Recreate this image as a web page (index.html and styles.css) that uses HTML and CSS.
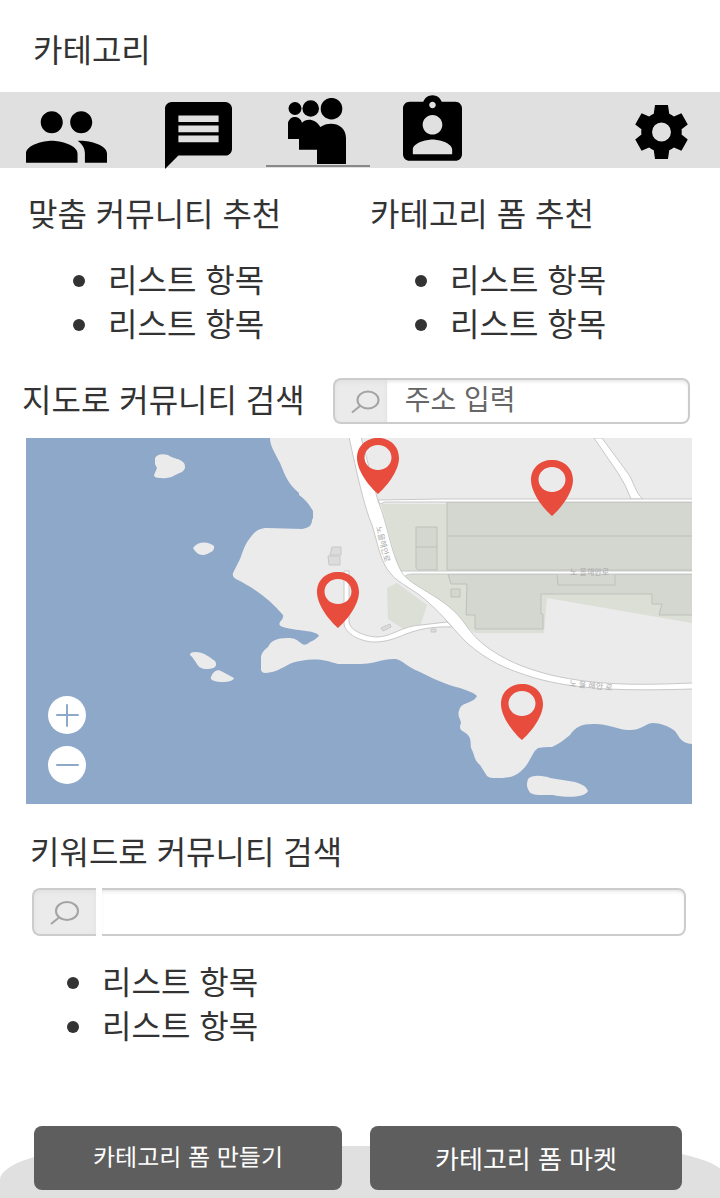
FILE: index.html
```html
<!DOCTYPE html>
<html lang="ko">
<head>
<meta charset="utf-8">
<meta name="viewport" content="width=device-width, initial-scale=1">
<title>카테고리</title>
<link rel="stylesheet" href="styles.css">
</head>
<body>
<div class="page">
  <header class="header"><h1 class="title">카테고리</h1></header>

  <nav class="tabs" aria-label="메뉴">
    <a class="tab tab-people" href="#people" aria-label="친구">
      <svg viewBox="1 5 22 14" width="81" height="52"><path d="M16 11c1.66 0 2.99-1.34 2.99-3S17.66 5 16 5s-3 1.34-3 3 1.34 3 3 3zm-8 0c1.66 0 2.99-1.34 2.99-3S9.66 5 8 5 5 6.340 5 8s1.340 3 3 3zm0 2c-2.330 0-7 1.170-7 3.500V19h14v-2.500c0-2.330-4.670-3.500-7-3.500zm8 0c-.29 0-.62.02-.97.05 1.160.84 1.970 1.970 1.970 3.450V19h6v-2.500c0-2.330-4.670-3.500-7-3.500z"/></svg>
    </a>
    <a class="tab tab-chat" href="#chat" aria-label="메시지">
      <svg viewBox="2 2 20 20" width="67" height="67"><path d="M20 2H4c-1.100 0-1.990.9-1.990 2L2 22l4-4h14c1.100 0 2-.9 2-2V4c0-1.100-.9-2-2-2zm-2 12H6v-2h12v2zm0-3H6V9h12v2zm0-3H6V6h12v2z"/></svg>
    </a>
    <a class="tab tab-community" href="#community" aria-label="커뮤니티" aria-current="page">
      <svg viewBox="288 98 58 66" width="58" height="66"><circle cx="295" cy="108.500" r="6.500"/><circle cx="310.700" cy="108.500" r="8.300"/><circle cx="331.500" cy="108.700" r="10.800"/><path d="M288 139v-13.500a7 7 0 0 1 14-2.800c4-4.500 13.500-4.500 18.300 4.300C329 120.500 346 123 346 138v26h-29v-14.300h-18V139z"/></svg>
    </a>
    <a class="tab tab-profile" href="#profile" aria-label="프로필">
      <svg viewBox="3 1 18 20" width="59" height="66"><path d="M19 3h-4.180C14.400 1.840 13.300 1 12 1c-1.300 0-2.400.84-2.820 2H5c-1.100 0-2 .9-2 2v14c0 1.100.9 2 2 2h14c1.100 0 2-.9 2-2V5c0-1.100-.9-2-2-2zm-7 0c.55 0 1 .45 1 1s-.45 1-1 1-1-.45-1-1 .45-1 1-1zm0 4c1.660 0 3 1.340 3 3s-1.340 3-3 3-3-1.340-3-3 1.340-3 3-3zm6 12H6v-1.400c0-2 4-3.100 6-3.100s6 1.100 6 3.100V19z"/></svg>
    </a>
    <a class="tab tab-settings" href="#settings" aria-label="설정">
      <svg viewBox="2.270 2 19.460 20" width="53" height="54"><path d="M12 15.500a3.500 3.500 0 1 1 0-7 3.500 3.500 0 0 1 0 7m7.430-2.530c.04-.32.07-.64.07-.97s-.03-.66-.07-1l2.300-1.740-2.350-4.160-2.800 1.150c-.5-.4-1.080-.75-1.710-1L14.400 2H9.600l-.47 3.250c-.63.25-1.210.6-1.710 1L4.620 5.100 2.270 9.260 4.570 11c-.04.340-.07.670-.07 1s.03.650.07.970l-2.300 1.770 2.350 4.160 2.800-1.150c.5.4 1.080.75 1.710 1L9.600 22h4.800l.47-3.250c.63-.25 1.210-.6 1.710-1l2.800 1.150 2.350-4.160z"/></svg>
    </a>
  </nav>

  <main class="main">
    <div class="recommend">
      <section>
        <h2 class="heading">맞춤 커뮤니티 추천</h2>
        <ul class="list"><li>리스트 항목</li><li>리스트 항목</li></ul>
      </section>
      <section>
        <h2 class="heading">카테고리 폼 추천</h2>
        <ul class="list"><li>리스트 항목</li><li>리스트 항목</li></ul>
      </section>
    </div>

    <section class="map-section">
      <div class="map-head">
        <h2 class="heading">지도로 커뮤니티 검색</h2>
        <label class="search search-address">
          <span class="search-icon"><svg viewBox="0 0 30 26" width="30" height="26"><ellipse cx="18" cy="12" rx="10.500" ry="8.500"/><path d="M10 18 2 24.500"/></svg></span>
          <input type="text" placeholder="주소 입력" aria-label="주소 입력">
        </label>
      </div>
      <div class="map">
        <svg class="map-art" viewBox="26 438 666 366" role="img" aria-label="지도">
          <rect class="sea" x="26" y="438" width="666" height="366"/>
          <g class="land">
            <path d="M270 438C270 446 275 453 280 463C285 475 288 484 299 493L299 495C306 500 309 504 313 511L313 518L312 520C312 526 308 528 302 529L267 528C257 528 253 534 250 538C243 546 242 557 238 563L233 573Q232 577 236 579C256 589 270 600 283 615Q284 618 280 622Q278 626 283 627C295 631 317 630 319 636Q315 640 310 642Q306 646 302 644C297 640 295 638 288 638C276 638 271 641 268 647C263 651 261 654 261 658V670Q262 673 265 673C282 672 285 663 300 661C318 658 324 660 338 664H360C374 664 382 659 394 659C402 659 405 666 420 672C432 678 444 684 460 688Q475 693 477 696C474 703 463 702 460 708C456 716 461 719 461 723Q459 727 461 730L467 734C473 740 469 745 472 750C475 756 474 760 480 765L487 776Q489 778 493 778C506 778 513 778 520 772C531 763 531 753 538 748C544 747 547 747 552 747C559 744 564 740 570 735C575 727 582 724 593 724C612 724 616 730 630 730C642 730 646 723 653 723C660 723 669 726 675 731C680 738 681 743 692 744V438Z"/>
            <path d="M155 458C158 453 164 454 168 455C173 459 180 458 184 463Q187 468 182 472C174 475 172 479 160 478Q154 478 154 475L157 468L155 464Z"/>
            <path d="M193 548C198 541 208 541 214 546Q215 551 209 553C202 557 197 555 193 548Z"/>
            <path d="M190 655Q190 652 195 652C205 652 210 658 215 661C219 668 211 669 207 669C196 669 198 662 190 655Z"/>
            <path d="M211 677C213 672 217 669 221 671L234 678C233 684 208 683 211 677Z"/>
            <path d="M528 779C532 774 545 776 550 778L575 782Q586 785 588 791C584 799 562 797 553 795C542 795 531 796 529 791C526 786 527 783 528 779Z"/>
          </g>
          <path class="green" d="M381 504H692V623L547 598L544 633H475L402 581Z"/>
          <path class="green" d="M387 588 397 583 427 605 420 626 405 630 388 619Z"/>
          <g class="building">
            <path d="M447 502H693V570H447ZM447 536H693"/>
            <path d="M448 574 451 584H467L466 615H475V629H543V614H541V594H652V604H662L659 615H693V574Z"/>
            <path d="M416 527H437V570H418L416 568ZM416 547H437M451 589H460V597H451ZM557 574 558 585H615V574"/>
          </g>
          <g class="house">
            <path d="M332 547H341V555H330Z"/>
            <path d="M328 556H340V565H329Z"/>
            <path d="M381 628 390 624 391 627 383 631ZM431 629H436V632H431Z"/>
          </g>
          <g class="road">
            <path d="M594 438 618 473Q626 485 631 499H643C635 493 634 481 627 472L602 438Z"/>
            <path d="M378 500 440 499H693V502H385L380 504Z"/>
            <path d="M400 571 693 571V574H412Q405 574 401 580Z"/>
            <path d="M344 571H349V620C348 631 367 637 378 637C393 636 402 626 421 625L447 622L453 627C431 626 417 630 406 634C394 639 386 642 374 642C362 642 344 634 344 623Z"/>
            <path d="M349 437C357 474 364 506 372 525C378 544 380 562 391 574C399 584 416 590 430 604C443 615 454 630 467 643C488 661 505 669 535 678C577 690 625 691 693 689V683C642 685 598 686 551 675C523 668 502 659 483 644C467 631 464 618 448 606C431 592 407 583 401 571C390 550 388 525 378 501L361 437Z"/>
          </g>
          <g class="road-label">
            <text transform="translate(376 527) rotate(76)">노을해안로</text>
            <text x="570" y="575">노 을해안로</text>
            <text transform="translate(569 686) rotate(6)">노 을 해안 로</text>
          </g>
          <defs><path id="pin" fill-rule="evenodd" d="M21 56C14 50 0 34 0 20C0 8 9 0 21 0S42 8 42 20C42 34 28 50 21 56ZM21 7C13.500 7 7.500 12.500 7.500 19.500S13.500 32 21 32 34.500 26.500 34.500 19.500 28.500 7 21 7Z"/></defs>
          <g class="pins"><use href="#pin" x="357" y="438"/><use href="#pin" x="531" y="460"/><use href="#pin" x="317" y="572"/><use href="#pin" x="501" y="684"/></g>
        </svg>
        <div class="zoom">
          <button type="button" aria-label="확대"><svg viewBox="0 0 38 38" width="38" height="38"><path d="M9 19H30M19 9V30"/></svg></button>
          <button type="button" aria-label="축소"><svg viewBox="0 0 38 38" width="38" height="38"><path d="M9 19H30"/></svg></button>
        </div>
      </div>
    </section>

    <section class="keyword">
      <h2 class="heading">키워드로 커뮤니티 검색</h2>
      <label class="search search-keyword">
        <span class="search-icon"><svg viewBox="0 0 30 26" width="30" height="26"><ellipse cx="18" cy="12" rx="11" ry="9"/><path d="M10 18.500 2 25"/></svg></span>
        <input type="text" aria-label="키워드">
      </label>
      <ul class="list"><li>리스트 항목</li><li>리스트 항목</li></ul>
    </section>
  </main>

  <footer class="footer">
    <button class="action action-create" type="button">카테고리 폼 만들기</button>
    <button class="action action-market" type="button">카테고리 폼 마켓</button>
  </footer>
</div>
</body>
</html>
```
FILE: styles.css
```css
* { box-sizing: border-box; }

body {
  margin: 0;
  background: #fff;
  color: #333;
  font-family: "Liberation Sans", "Noto Sans CJK KR", sans-serif;
  font-size: 32px;
  line-height: 44px;
}

h1, h2, ul { margin: 0; padding: 0; }
svg { display: block; flex: none; }
input, button { font-family: inherit; border: 0; padding: 0; }

.page { display: flex; flex-direction: column; min-height: 100vh; }
.header { padding: 29px 33px 19px; }
.title, .heading { font-size: 32px; font-weight: 400; white-space: nowrap; }

.tabs {
  display: flex;
  height: 76px;
  padding: 0 32px 0 26px;
  background: #e0e0e0;
}
.tab { display: flex; justify-content: center; align-items: flex-start; color: #000; }
.tab svg { fill: currentColor; }
.tab-people { padding-top: 19px; }
.tab-chat { padding-top: 10px; margin-left: 58px; }
.tab-community {
  width: 104px;
  height: 75px;
  margin-left: 34px;
  padding: 6px 2px 0 0;
  border-bottom: 2px solid #888;
}
.tab-profile { padding-top: 3px; margin-left: 33px; }
.tab-settings { padding-top: 13px; margin-left: auto; }

.main { flex: 1; padding: 25px 28px 0; }
.recommend { display: grid; grid-template-columns: 342px 1fr; }
.list { margin-top: 22px; padding-left: 45px; list-style: none; }
.list li { display: flex; align-items: center; gap: 23px; }
.list li::before {
  content: "";
  width: 12px;
  height: 12px;
  border-radius: 50%;
  background: currentColor;
}

.map-section { margin: 31px 0 0 -6px; }
.map-head { display: flex; align-items: center; gap: 28px; padding-right: 2px; }
.search { display: flex; min-width: 0; }
.search-icon {
  display: flex;
  align-items: center;
  border: 2px solid #ccc;
  border-right: 0;
  border-radius: 8px 0 0 8px;
  background: #ebebeb;
  box-shadow: inset 0 2px 5px #e0e0e0;
}
.search-icon svg { fill: none; stroke: #a3a3a3; stroke-width: 2; }
.search input {
  flex: 1;
  min-width: 0;
  border: 2px solid #ccc;
  border-left: 0;
  border-radius: 0 8px 8px 0;
  background: #fff;
  box-shadow: inset 0 3px 4px -2px #ddd;
  color: #333;
  font-size: 28px;
}
.search input::placeholder { color: #666; opacity: 1; }
.search-address { flex: 1; height: 46px; }
.search-address .search-icon { width: 54px; padding-left: 15px; }
.search-address input { padding-left: 18px; }

.map { position: relative; margin: 14px 0 0 4px; }
.map-art { width: 100%; height: auto; }
.sea { fill: #8ea8c9; }
.land { fill: #ebebeb; }
.green { fill: #dcdfd6; }
.building path { fill: #d4d7d0; stroke: #bdc0ba; stroke-width: 1; }
.house path { fill: #dcdcdc; stroke: #c8c8c8; stroke-width: 1; }
.road path { fill: #fff; stroke: #c8c8c8; stroke-width: 1; }
.road-label { fill: #aaa; font-size: 8px; }
.pins { fill: #e74c3c; }
.zoom {
  position: absolute;
  left: 22px;
  bottom: 20px;
  display: flex;
  flex-direction: column;
  gap: 12px;
}
.zoom button { width: 38px; height: 38px; border-radius: 50%; background: #fff; }
.zoom svg { fill: none; stroke: #8ea8c9; stroke-width: 2; stroke-linecap: round; }

.keyword { padding: 27px 6px 0 4px; }
.keyword .heading { margin-left: -2px; }
.search-keyword { height: 48px; margin-top: 13px; gap: 6px; }
.search-keyword .search-icon { width: 64px; padding-left: 15px; }
.search-keyword input { padding: 0 18px; }
.keyword .list { margin-top: 25px; padding-left: 35px; }

.footer {
  position: relative;
  display: grid;
  grid-template-columns: 308fr 312fr;
  gap: 28px;
  padding: 0 38px 8px 34px;
  overflow: hidden;
}
.footer::before {
  content: "";
  position: absolute;
  inset: 20px -8px 0 0;
  border-radius: 130px 130px 0 0 / 34px 34px 0 0;
  background: #e0e0e0;
}
.action {
  position: relative;
  height: 64px;
  border-radius: 8px;
  background: #5e5e5e;
  color: #fff;
  text-rendering: geometricPrecision;
}
.action-create { padding-bottom: 6px; font-size: 24px; }
.action-market { font-size: 26px; }
```
